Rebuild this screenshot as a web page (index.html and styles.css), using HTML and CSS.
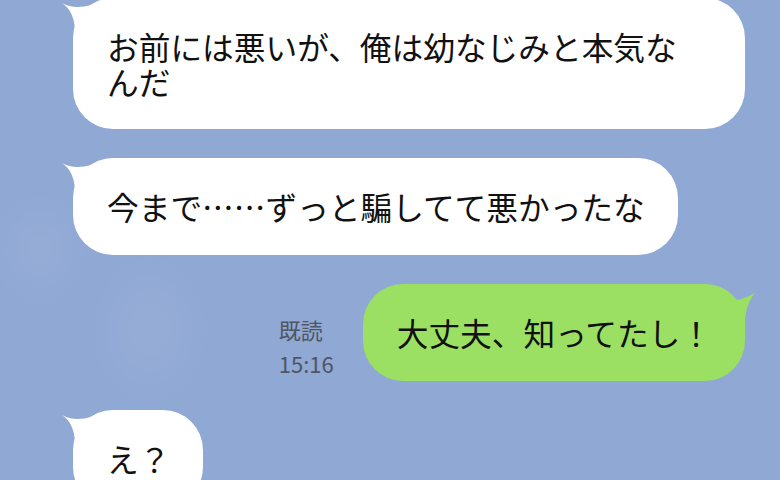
FILE: index.html
```html
<!DOCTYPE html>
<html lang="ja">
<head>
    <meta charset="UTF-8">
    <meta name="viewport" content="width=device-width, initial-scale=1.0">
    <title>トーク</title>
    <link rel="stylesheet" href="styles.css">
</head>
<body>
    <div class="chat">
        <!-- 相手のメッセージ -->
        <div class="row row-in">
            <div class="bubble bubble-in bubble-long">
                <svg class="tail tail-in" viewBox="0 0 32 40"><path d="M1 5 Q13 12 30 7 L30 40 L14 40 L14 32 Q13 13 1 5 Z"/></svg>
                <span class="text">お前には悪いが、俺は幼なじみと本気な<br>んだ</span>
            </div>
        </div>

        <div class="row row-in">
            <div class="bubble bubble-in">
                <svg class="tail tail-in" viewBox="0 0 32 40"><path d="M1 5 Q13 12 30 7 L30 40 L14 40 L14 32 Q13 13 1 5 Z"/></svg>
                <span class="text">今まで……ずっと騙してて悪かったな</span>
            </div>
        </div>

        <!-- 自分のメッセージ -->
        <div class="row row-out">
            <div class="meta">
                <span>既読</span>
                <span>15:16</span>
            </div>
            <div class="bubble bubble-out">
                <svg class="tail tail-out" viewBox="0 0 32 44"><path d="M31 4 Q22 14 6 16 L6 44 L16 44 L16 36 Q18 14 31 4 Z"/></svg>
                <span class="text">大丈夫、知ってたし！</span>
            </div>
        </div>

        <div class="row row-in">
            <div class="bubble bubble-in">
                <svg class="tail tail-in" viewBox="0 0 32 40"><path d="M1 5 Q13 12 30 7 L30 40 L14 40 L14 32 Q13 13 1 5 Z"/></svg>
                <span class="text">え？</span>
            </div>
        </div>
    </div>
</body>
</html>
```

FILE: styles.css
```css
body {
    margin: 0;
    padding: 0;
    height: 480px;
    overflow: hidden;
    font-family: "Noto Sans CJK JP", "Noto Sans", sans-serif;
    background-color: #8fa8d4;
    background-image:
        radial-gradient(ellipse 70px 90px at 150px 330px, rgba(255, 255, 255, 0.06), transparent),
        radial-gradient(ellipse 60px 70px at 40px 250px, rgba(255, 255, 255, 0.05), transparent);
}
.chat {
    display: flex;
    flex-direction: column;
    gap: 29px;
    margin-top: -2px;
    padding: 0 35px 0 73px;
}
.row {
    display: flex;
    align-items: flex-end;
}
.row-out {
    justify-content: flex-end;
    gap: 29px;
}
.bubble {
    position: relative;
    max-width: 674px;
    box-sizing: border-box;
    padding: 31px 33px 31px 34px;
    border-radius: 40px;
    font-size: 31.7px;
    line-height: 35px;
    color: #111;
}
.bubble-long {
    width: 674px;
    padding-bottom: 30px;
}
.bubble-in {
    background: #fff;
}
.bubble-out {
    background: #9be062;
}
.text {
    position: relative;
}
.tail {
    position: absolute;
    top: 0;
}
.tail-in {
    left: -12px;
    width: 32px;
    height: 40px;
    fill: #fff;
}
.tail-out {
    right: -16px;
    width: 32px;
    height: 44px;
    fill: #9be062;
}
.meta {
    display: flex;
    flex-direction: column;
    font-size: 22px;
    line-height: 34px;
    color: #4f5563;
    margin-bottom: 1px;
}
```
